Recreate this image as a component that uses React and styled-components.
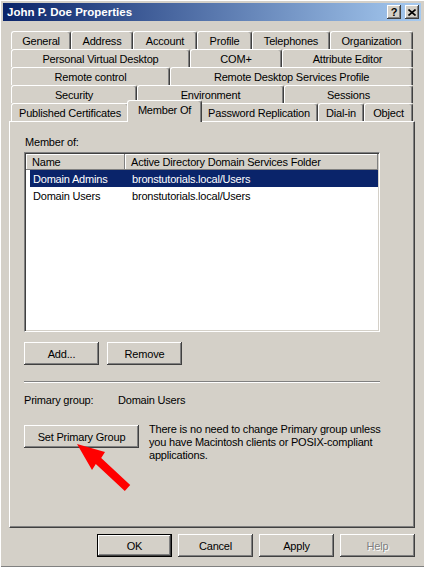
import React from "react";
import styled, { createGlobalStyle } from "styled-components";

const GlobalStyle = createGlobalStyle`
  html, body {
    margin: 0;
    padding: 0;
    background: #d4d0c8;
  }
  body {
    font-family: "Liberation Sans", Arial, sans-serif;
    font-size: 11px;
    letter-spacing: -0.2px;
    color: #000;
  }
`;

const tabRows = [
  [
    { label: "General", w: 60 },
    { label: "Address", w: 62 },
    { label: "Account", w: 64 },
    { label: "Profile", w: 55 },
    { label: "Telephones", w: 78 },
    { label: "Organization", w: 83 },
  ],
  [
    { label: "Personal Virtual Desktop", w: 179 },
    { label: "COM+", w: 92 },
    { label: "Attribute Editor", w: 131 },
  ],
  [
    { label: "Remote control", w: 159 },
    { label: "Remote Desktop Services Profile", w: 243 },
  ],
  [
    { label: "Security", w: 126 },
    { label: "Environment", w: 147 },
    { label: "Sessions", w: 129 },
  ],
  [
    { label: "Published Certificates", w: 118 },
    { label: "Member Of", w: 71, active: true },
    { label: "Password Replication", w: 118 },
    { label: "Dial-in", w: 46 },
    { label: "Object", w: 49 },
  ],
];

const groups = [
  { name: "Domain Admins", folder: "bronstutorials.local/Users", selected: true },
  { name: "Domain Users", folder: "bronstutorials.local/Users" },
];

const raisedShadow = `
  box-shadow: inset -1px -1px #404040, inset 1px 1px #fff,
    inset -2px -2px #808080, inset 2px 2px #d4d0c8;
`;

const Properties = () => {
  return (
    <Window>
      <TitleBar>
        <Title>John P. Doe Properties</Title>
        <CaptionButton>?</CaptionButton>
        <CaptionButton $close>
          <svg width="8" height="7" viewBox="0 0 8 7">
            <path d="M0.5 0.5 L7.5 6.5 M7.5 0.5 L0.5 6.5" stroke="#000" strokeWidth="1.6" />
          </svg>
        </CaptionButton>
      </TitleBar>

      <Body>
        <TabStack>
          {tabRows.map((row, i) => (
            <TabRow key={i}>
              {row.map((t) => (
                <Tab key={t.label} $w={t.w} $active={t.active}>
                  {t.label}
                </Tab>
              ))}
            </TabRow>
          ))}
        </TabStack>

        <Panel>
          <Label>Member of:</Label>
          <ListBox>
            <ListHeader>
              <HeaderCell $w={99}>Name</HeaderCell>
              <HeaderCell>Active Directory Domain Services Folder</HeaderCell>
            </ListHeader>
            {groups.map((g) => (
              <ListRow key={g.name} $selected={g.selected}>
                <NameCell>{g.name}</NameCell>
                <FolderCell>{g.folder}</FolderCell>
              </ListRow>
            ))}
          </ListBox>

          <ButtonRow>
            <Button>Add...</Button>
            <Button>Remove</Button>
          </ButtonRow>

          <Separator />

          <InfoRow>
            <InfoLabel>Primary group:</InfoLabel>
            <span>Domain Users</span>
          </InfoRow>

          <SetRow>
            <Button $w={115}>Set Primary Group</Button>
            <Note>
              There is no need to change Primary group unless
              <br />
              you have Macintosh clients or POSIX-compliant
              <br />
              applications.
            </Note>
          </SetRow>
        </Panel>

        <Footer>
          <Button $default>OK</Button>
          <Button>Cancel</Button>
          <Button>Apply</Button>
          <Button disabled>Help</Button>
        </Footer>
      </Body>

      <Arrow viewBox="0 0 424 567">
        <polygon
          points="77,444 105,452 101.2,458.1 130.2,485.1 124.8,490.9 95.8,463.9 92,470"
          fill="#ff0000"
        />
      </Arrow>
    </Window>
  );
};

const Window = styled.div`
  position: relative;
  width: 424px;
  height: 567px;
  box-sizing: border-box;
  padding: 3px 3px 0 3px;
  background: #d4d0c8;
  box-shadow: inset 1px 1px #fff, inset 0 -1px #808080;
  overflow: hidden;
`;

const TitleBar = styled.div`
  height: 18px;
  display: flex;
  align-items: center;
  gap: 2px;
  padding: 0 2px 0 4px;
  background: linear-gradient(to right, #0a246a, #a6caf0);
`;

const Title = styled.div`
  flex: 1;
  color: #fff;
  font-weight: bold;
  font-size: 11.5px;
  letter-spacing: 0;
  white-space: nowrap;
`;

const CaptionButton = styled.div`
  width: 14px;
  height: 14px;
  box-sizing: border-box;
  margin-left: ${(p) => (p.$close ? "2px" : "0")};
  display: flex;
  align-items: center;
  justify-content: center;
  background: #d4d0c8;
  font-weight: bold;
  font-size: 11px;
  letter-spacing: 0;
  line-height: 1;
  ${raisedShadow}
`;

const Body = styled.div`
  padding: 10px 6px 0 6px;
`;

const TabStack = styled.div`
  margin: 0 2px;
`;

const TabRow = styled.div`
  display: flex;
  align-items: flex-end;
  height: 18px;
`;

const Tab = styled.div`
  flex: none;
  width: ${(p) => (p.$active ? p.$w + 4 : p.$w)}px;
  height: ${(p) => (p.$active ? 22 : 18)}px;
  margin: ${(p) => (p.$active ? "0 -2px -1px -2px" : "0")};
  padding-bottom: ${(p) => (p.$active ? "3px" : "0")};
  box-sizing: border-box;
  position: relative;
  z-index: ${(p) => (p.$active ? 2 : 0)};
  display: flex;
  align-items: center;
  justify-content: center;
  white-space: nowrap;
  background: #d4d0c8;
  border-top: 1px solid #fff;
  border-left: 1px solid #fff;
  border-right: 1px solid #404040;
  border-radius: 3px 3px 0 0;
  box-shadow: inset -1px 0 #808080;
`;

const Panel = styled.div`
  height: 407px;
  box-sizing: border-box;
  position: relative;
  z-index: 1;
  display: flex;
  flex-direction: column;
  padding: 14px 34px 0 14px;
  border: 1px solid;
  border-color: #fff #404040 #404040 #fff;
  box-shadow: inset -1px -1px #808080;
`;

const Label = styled.div`
  line-height: 13px;
  margin-bottom: 3px;
  padding-left: 1px;
`;

const ListBox = styled.div`
  height: 180px;
  box-sizing: border-box;
  padding: 1px;
  background: #fff;
  border: 1px solid;
  border-color: #808080 #fff #fff #808080;
  box-shadow: inset 1px 1px #404040, inset -1px -1px #d4d0c8;
`;

const ListHeader = styled.div`
  display: flex;
  height: 16px;
`;

const HeaderCell = styled.div`
  flex: ${(p) => (p.$w ? "none" : "1")};
  width: ${(p) => (p.$w ? `${p.$w}px` : "auto")};
  box-sizing: border-box;
  display: flex;
  align-items: center;
  padding-left: 6px;
  white-space: nowrap;
  background: #d4d0c8;
  box-shadow: inset -1px -1px #808080, inset 1px 1px #fff;
`;

const ListRow = styled.div`
  display: flex;
  align-items: center;
  height: 17px;
  margin-left: 4px;
  background: ${(p) => (p.$selected ? "#0a246a" : "transparent")};
  color: ${(p) => (p.$selected ? "#fff" : "#000")};
`;

const NameCell = styled.div`
  width: 95px;
  box-sizing: border-box;
  padding-left: 3px;
  white-space: nowrap;
`;

const FolderCell = styled.div`
  padding-left: 7px;
  white-space: nowrap;
`;

const ButtonRow = styled.div`
  display: flex;
  gap: 8px;
  margin-top: 10px;
`;

const Button = styled.div`
  flex: none;
  width: ${(p) => p.$w || 75}px;
  height: 23px;
  box-sizing: border-box;
  display: flex;
  align-items: center;
  justify-content: center;
  white-space: nowrap;
  background: #d4d0c8;
  color: ${(p) => (p.disabled ? "#808080" : "#000")};
  text-shadow: ${(p) => (p.disabled ? "1px 1px #fff" : "none")};
  box-shadow: ${(p) =>
    p.$default
      ? "inset 0 0 0 1px #000, inset -2px -2px #404040, inset 2px 2px #fff, inset -3px -3px #808080"
      : "inset -1px -1px #404040, inset 1px 1px #fff, inset -2px -2px #808080"};
`;

const Separator = styled.div`
  margin-top: 16px;
  border-top: 1px solid #808080;
  border-bottom: 1px solid #fff;
`;

const InfoRow = styled.div`
  display: flex;
  margin-top: 11px;
  line-height: 13px;
`;

const InfoLabel = styled.span`
  width: 94px;
`;

const SetRow = styled.div`
  display: flex;
  align-items: flex-start;
  margin-top: 18px;
`;

const Note = styled.div`
  margin: -2px 0 0 10px;
  line-height: 13px;
  white-space: nowrap;
`;

const Footer = styled.div`
  display: flex;
  justify-content: flex-end;
  gap: 6px;
  margin-top: 6px;
`;

const Arrow = styled.svg`
  position: absolute;
  left: 0;
  top: 0;
  width: 424px;
  height: 567px;
  pointer-events: none;
  z-index: 5;
`;

export default function App() {
  return (
    <>
      <GlobalStyle />
      <Properties />
    </>
  );
}
